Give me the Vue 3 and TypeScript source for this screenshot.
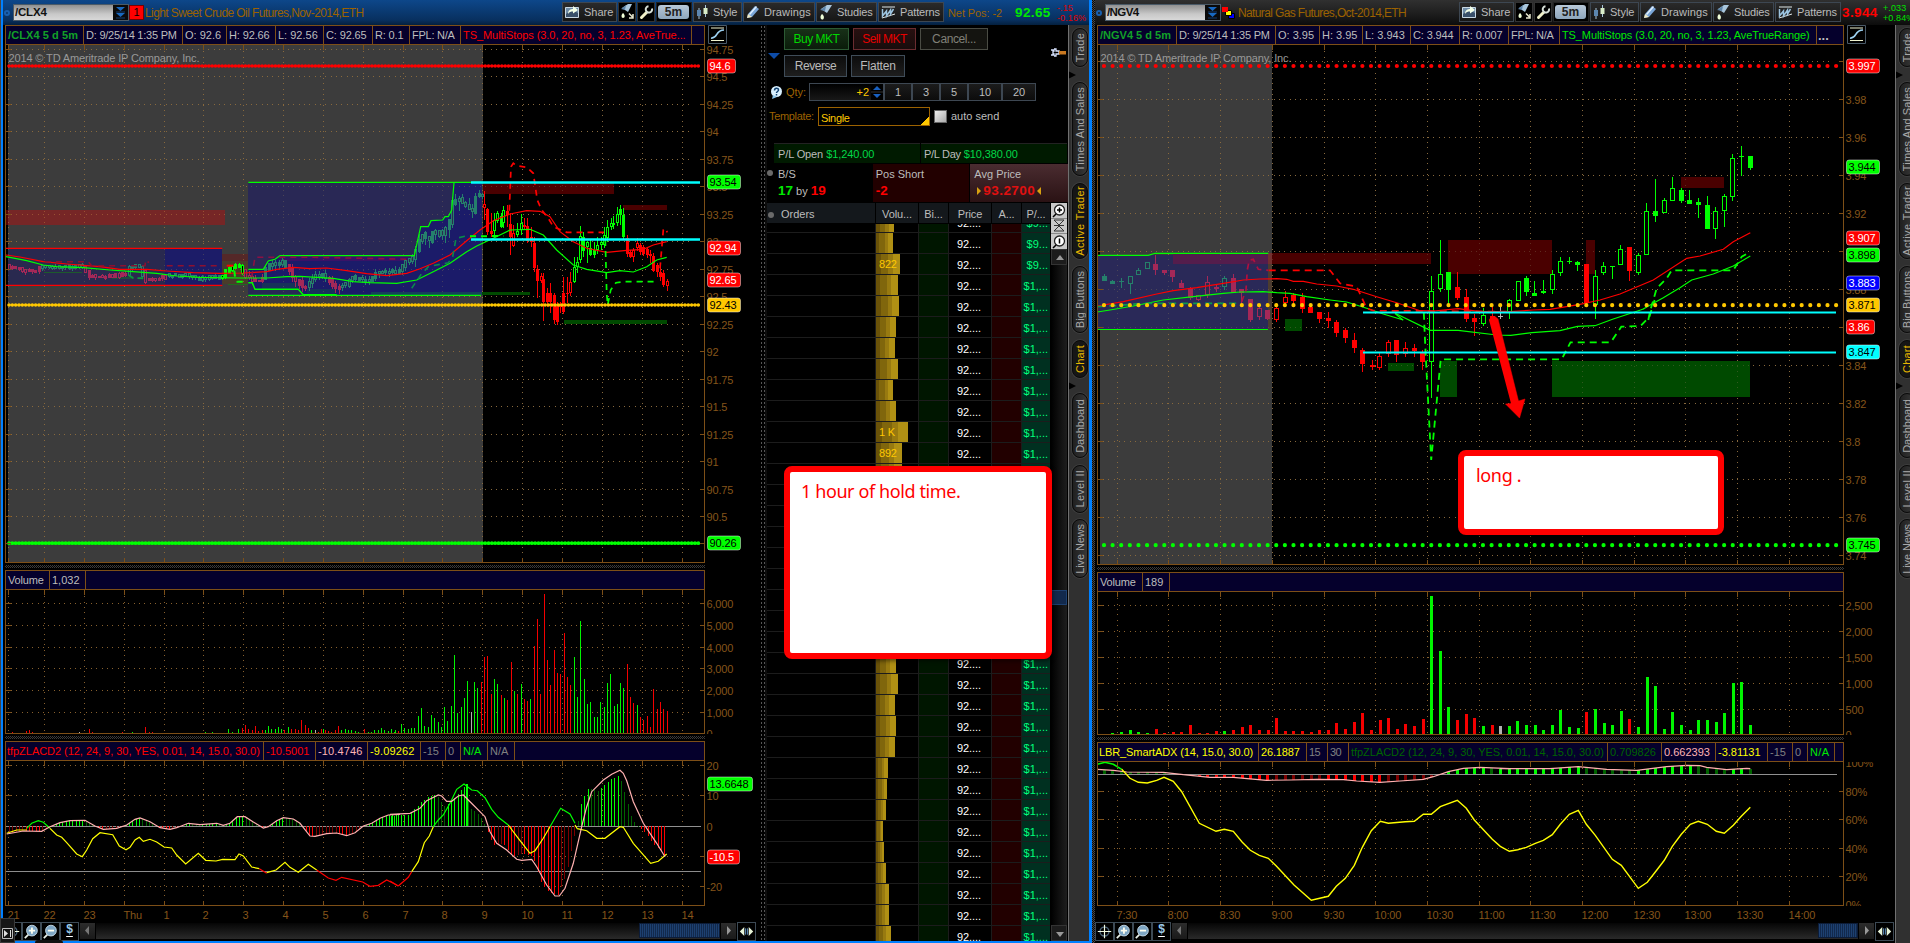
<script setup lang="ts">
type Kind = 'g' | 'G' | 'r' | 'R' | 'w'
interface Cell { t: string; w: number; fit?: number; c?: string }
interface Candle { x: number; hi: number; top: number; bot: number; lo: number; k: Kind; dim: boolean }
interface Shape { pts: string; c: string; w?: number; dash?: string; fill?: string; cap?: 'round' | 'butt' }
interface Box { x: number; y: number; w: number; h: number; c: string }
interface Label { y: number; t: string }
interface Flag { y: number; t: string; bg: string; fg: string; w: number }
interface Pane {
  top: number; h: number; shade: number; grid: number[]; labels: Label[]; flags: Flag[]
  under: Box[]; fills: Shape[]; bars: Box[]; lines: Shape[]; candles: Candle[]; over: Shape[]; ticks: boolean
}
interface Win {
  id: 'cl' | 'ng'; symbol: string; title: string; titleFit: number; x0: number; right: number; width: number
  cols: number[]; times: string[]; status: Cell[]; volCells: Cell[]; studyCells: Cell[]; panes: Pane[]
}

const GREEN = '#00ff00'
const RED = '#ff0000'
const YEL = '#ffff00'
const PINK = '#ffb0b0'
const CYAN = '#00ffff'
const GOLD = '#ffc800'

/* Spreads or tightens a label so that it takes a fixed width. */
const vFit = {
  mounted(el: HTMLElement, b: { value?: number }) {
    if (!b.value) return
    const n = (el.textContent ?? '').trim().length
    const now = Math.max(el.offsetWidth, el.offsetHeight)
    el.style.letterSpacing = ((b.value - now) / n).toFixed(3) + 'px'
  },
}

/* Series are stored in sub-pixel units (3 to a pixel) from a local origin. */
const pairs = (s: string) => s.trim().split(/\s+/).map((p) => p.split(',').map(Number))
const at = (ox: number, oy: number, s: string, sx = 3) =>
  pairs(s).map(([x, y]) => (ox + x / sx).toFixed(1) + ',' + (oy + y / 3).toFixed(1)).join(' ')
const line = (c: string, pts: string, w = 1.2, dash = ''): Shape => ({ pts, c, w, dash })
const rect = (ox: number, oy: number, x1: number, y1: number, x2: number, y2: number, c: string, sx = 3): Box =>
  ({ x: ox + x1 / sx, y: oy + y1 / 3, w: (x2 - x1) / sx, h: (y2 - y1) / 3, c })

function volume(ox: number, oy: number, base: number, s: string, w: number): Box[] {
  let c = GREEN
  const out: Box[] = []
  for (const tok of s.trim().split(/[\s,]+/)) {
    if (tok === 'g') c = '#00f400'
    else if (tok === 'r') c = '#f40000'
    else if (tok === 'w') c = '#b0b0b0'
    else {
      const [x, y] = tok.split(':').map(Number)
      out.push({ x: Math.round(ox + x / 3 - w / 2), y: oy + y / 3, w, h: (base - y) / 3, c })
    }
  }
  return out
}

function interp(p: number[][], x: number) {
  for (let i = 1; i < p.length; i++) {
    if (x <= p[i][0]) {
      const [ax, ay] = p[i - 1]
      const [bx, by] = p[i]
      return ay + ((by - ay) * (x - ax)) / (bx - ax)
    }
  }
  return p[p.length - 1][1]
}

function histogram(ox: number, oy: number, zero: number, s: string, from: number, to: number, step: number, w: number): Box[] {
  const p = pairs(s)
  const out: Box[] = []
  for (let x = from; x <= to; x += step) {
    const v = interp(p, x)
    const grow = Math.abs(interp(p, x) - zero) >= Math.abs(interp(p, x - step * 0.8) - zero)
    const up = v < zero
    out.push({
      x: Math.round(ox + x / 3 - w / 2), w, y: oy + Math.min(v, zero) / 3, h: Math.max(0.8, Math.abs(v - zero) / 3),
      c: up ? (grow ? GREEN : '#006400') : grow ? RED : '#7c0000',
    })
  }
  return out
}

/* rows: x,high,top,bottom,low,kind */
function candles(ox: number, oy: number, s: string, dimTo = 0, sx = 3): Candle[] {
  return s.trim().split(/\s+/).map((row) => {
    const f = row.split(',')
    const [x, hi, top, bot, lo] = f.slice(0, 5).map(Number)
    return {
      x: Math.round(ox + x / sx), hi: oy + hi / 3, top: Math.round(oy + top / 3), bot: Math.round(oy + bot / 3),
      lo: oy + lo / 3, k: f[5] as Kind, dim: x < dimTo,
    }
  })
}

function overnight(): Candle[] {
  const mid = pairs(`25,800 60,802 75,812 110,812 125,800 180,800 255,798 265,825 300,830 380,822 395,798 425,798 437,842 480,836 500,828
    560,822 600,835 640,830 665,832 690,805 715,790 735,822 760,838 790,838 805,795 850,785 872,812 885,840 905,850 915,868 935,838 960,820
    985,832 1010,866 1040,852 1060,832 1110,842 1130,815 1200,812 1215,790 1243,770 1256,735 1270,700 1290,722 1305,685 1325,708 1350,670 1362,600
    1380,598 1400,615 1420,638 1430,590 1445,585`)
  const out: Candle[] = []
  let seed = 7
  const rnd = () => ((seed = (seed * 16807) % 2147483647) / 2147483647)
  for (let x = 26; x <= 1446; x += 10) {
    const a = interp(mid, x - 6) + (rnd() - 0.5) * 8
    const b = interp(mid, x + 6) + (rnd() - 0.5) * 8
    const amp = x > 1240 ? 26 : x > 740 ? 15 : 7
    const falling = (x < 120 || (x > 250 && x < 385) || (x > 430 && x < 500) || (x > 735 && x < 790) || (x > 865 && x < 925) || (x > 985 && x < 1025))
    out.push({
      x: Math.round(x / 3), hi: (Math.min(a, b) - rnd() * amp) / 3, top: Math.round((Math.min(a, b) - 3) / 3),
      bot: Math.round((Math.max(a, b) + 5) / 3), lo: (Math.max(a, b) + 4 + rnd() * amp) / 3,
      k: falling ? (rnd() > 0.6 ? 'r' : 'R') : rnd() > 0.35 ? 'g' : 'G', dim: !(x > 665 && x < 735),
    })
  }
  return out
}

function colour(c: Candle) {
  if (c.k === 'w') return '#b4b4b4'
  const up = c.k === 'g' || c.k === 'G'
  return c.dim ? (up ? '#25806c' : '#a42858') : up ? GREEN : RED
}
const hollow = (c: Candle) => c.k === 'g' || c.k === 'r'

/* ---------- crude oil ---------- */
const clPinkA = '20,912 70,903 125,904 150,890 180,878 210,872 255,871 285,888 310,898 350,895 380,885 405,868 420,864 450,875 480,893 510,898 530,893 565,880 600,884 650,880 670,886 690,880 712,860 735,860 760,876 790,894 805,890 830,872 850,863 880,867 900,880 930,918 945,919 980,911 1010,909 1040,917 1065,908 1090,888 1115,880 1140,865 1165,855 1200,853'
const clPinkB = '0,853 60,850 90,835 110,812 145,795 155,798 170,814 185,814 205,798 220,795 250,825 285,860 300,905 320,940 350,960 380,988 395,991 425,988 440,1010 470,1065 495,1098 508,1098 525,1075 550,1000 575,890 590,830 605,785 640,750 665,733 690,721 700,730 710,752 730,815 760,880 800,940 825,980'
const clHist = '0,858 60,854 90,820 115,800 140,795 165,830 185,815 205,790 225,770 240,835 270,855 290,895 310,945 340,940 370,980 400,970 430,980 455,1060 475,1085 505,1095 530,1030 552,925 562,885 572,825 595,775 625,782 660,750 688,735 705,790 725,860 740,885 760,900 790,940 832,982'

const clMain: Pane = {
  top: 45, h: 518, shade: 483, ticks: true,
  grid: Array.from({ length: 19 }, (_, i) => 49.5 + i * 27.47),
  labels: Array.from({ length: 18 }, (_, i) => ({ y: 50 + i * 27.47, t: String(94.75 - i * 0.25) })),
  flags: [
    { y: 66, t: '94.6', bg: RED, fg: '#fff', w: 28 },
    { y: 182, t: '93.54', bg: GREEN, fg: '#000', w: 33 },
    { y: 248, t: '92.94', bg: RED, fg: '#fff', w: 33 },
    { y: 280, t: '92.65', bg: RED, fg: '#fff', w: 33 },
    { y: 305, t: '92.43', bg: GOLD, fg: '#000', w: 33 },
    { y: 543, t: '90.26', bg: GREEN, fg: '#000', w: 33 },
  ],
  under: [
    rect(0, 0, 18, 630, 675, 675, 'rgba(200,10,10,.42)'),
    rect(0, 0, 24, 746, 495, 856, '#29294f'),
    rect(0, 0, 495, 746, 667, 856, '#1c1c68'),
    rect(0, 0, 745, 547, 1445, 886, '#292855'),
    rect(0, 0, 667, 763, 745, 783, 'rgba(120,10,10,.4)'),
    rect(0, 0, 667, 783, 745, 852, 'rgba(100,60,10,.35)'),
  ],
  fills: [
    { pts: at(0, 0, '745,808 790,808 805,783 825,778 840,767 1243,767 1262,680 1285,680 1293,662 1328,660 1335,650 1345,650 1355,630 1362,548 1445,548 1445,886 910,886 895,868 765,868 757,848 745,848'), c: 'none', fill: '#1b1b69' },
  ],
  bars: [
    rect(0, 0, 840, 768, 1240, 783, 'rgba(90,10,100,.5)'),
    rect(0, 0, 132, 815, 245, 819, '#1d5a2c'), rect(0, 0, 336, 830, 400, 837, '#1f4a3c'),
    rect(0, 0, 785, 850, 895, 868, '#17325a'), rect(0, 0, 920, 867, 1005, 884, '#17325a'),
    rect(0, 0, 1113, 876, 1445, 885, '#15405a'), rect(0, 0, 685, 851, 745, 855, '#1f6a1f'),
    rect(460, 0, 69, 550, 462, 581, '#4a0000'), rect(460, 0, 489, 615, 621, 629, '#4a0000'),
    rect(460, 0, 66, 876, 210, 885, '#004a00'), rect(460, 0, 312, 960, 621, 972, '#004a00'),
  ],
  candles: [
    ...overnight(),
    ...candles(460, 0, `72,573,612,625,660,r 82,625,628,697,705,R 92,640,692,702,712,R 102,640,660,692,712,g 112,632,640,662,668,g 122,640,648,680,685,G
    130,618,630,670,685,g 140,615,632,645,680,R 150,640,673,710,765,R 160,675,700,738,742,r 172,668,692,705,710,g 182,642,670,690,705,g 192,655,675,680,690,R
    202,655,678,722,728,R 212,680,712,725,740,R 222,712,728,805,815,R 232,795,808,842,895,R 242,818,828,842,850,r 250,820,838,905,962,R 260,865,880,905,920,R
    270,850,878,905,938,R 282,880,885,960,972,R 290,905,918,965,975,R 300,905,915,920,940,r 310,830,880,935,942,R 320,830,878,882,910,R 330,815,845,880,888,r
    342,770,800,845,848,g 350,770,785,802,820,g 360,678,708,780,790,g 370,695,712,752,770,G 380,722,725,740,790,g 390,718,745,765,768,G 402,725,750,765,775,G
    412,712,735,750,762,g 422,712,725,735,750,g 432,680,705,735,745,g 440,660,680,715,725,g 452,655,670,680,690,g 460,648,668,675,688,g 470,622,642,670,678,g
    480,615,628,645,675,G 490,625,645,712,720,G 500,705,715,762,770,R 510,750,755,772,775,R 520,745,750,770,785,r 530,715,730,745,752,r 540,730,735,755,765,R
    550,735,742,762,768,R 560,740,748,765,775,R 570,750,762,768,790,R 580,760,768,812,815,R 590,788,795,815,830,R 600,795,815,830,842,R 610,810,818,855,860,R
    620,838,842,858,872,r`),
  ],
  lines: [
    line(RED, at(0, 0, '18,745 667,745')), line(RED, at(0, 0, '18,856 667,856')),
    line(RED, at(0, 0, '18,765 60,771 130,785 200,792 300,800 360,808 440,808 500,813 580,818 660,820 730,819 800,815 830,808 880,802 930,806 980,804 1040,812 1100,821 1160,827 1220,820 1260,806 1300,790 1350,765 1400,722 1440,690 1480,662 1530,642 1580,632 1620,634 1650,650 1680,695 1720,725 1760,745 1820,757 1880,751 1930,748 1960,735 2000,725')),
    line(GREEN, at(0, 0, '18,770 80,782 130,795 170,800 250,803 330,810 400,815 470,820 530,828 600,832 720,834 800,834 860,830 900,829 1000,835 1060,845 1110,848 1190,850 1250,840 1300,815 1350,790 1400,755 1430,738 1480,715 1530,690 1590,688 1630,705 1670,750 1720,795 1760,808 1820,818 1860,812 1900,816 1940,800 1970,780 2000,772')),
    line(GREEN, at(0, 0, '745,808 790,808 805,783 825,778 840,767 1243,767 1262,680 1285,680 1293,662 1328,660 1335,650 1345,650 1355,630 1362,548')),
    line(GREEN, at(0, 0, '745,547 1445,547')),
    line(GREEN, at(0, 0, '745,848 757,848 765,868 895,868 910,884 1010,884'), 1.4),
    line(GREEN, at(0, 0, '745,886 1443,886')),
    line('#8c1030', at(0, 0, '135,785 265,785 275,797 435,797 437,780 447,788'), 1.6, '6 5'),
    line('#8c1030', at(0, 0, '500,797 665,797'), 1.6, '6 5'),
    line(RED, at(0, 0, '680,797 700,797'), 2),
    line('#8c1044', at(0, 0, '755,830 765,772 790,772 940,772 1235,778'), 1.6, '6 5'),
    line('#0a9a3c', at(0, 0, '385,825 400,834 430,835'), 2, '6 4'),
    line('#0a8a4c', at(0, 0, '1235,865 1262,825 1285,800 1345,788 1358,770 1368,715 1395,709 1440,709'), 1.6, '6 5'),
    line(GREEN, at(460, 0, '30,709 130,708'), 2, '6 5'),
    line(GREEN, at(0, 0, '703,812 705,830 712,845 730,845'), 2, '6 5'),
    line(RED, at(460, 0, '148,632 153,500 160,490 170,497 200,502 220,520 232,600 245,630 265,655 280,680 320,697 432,697'), 1.7, '6 5'),
    line(RED, at(460, 0, '600,805 610,690 615,685 622,697'), 1.7, '6 5'),
    line(GREEN, at(460, 0, '436,720 440,880 443,915 452,870 468,848 490,845 590,845'), 1.7, '6 5'),
    line(CYAN, '471,182.5 700,182.5', 2.4), line(CYAN, '471,239.5 700,239.5', 2.4),
  ],
  over: [
    { pts: '9,66 701,66', c: RED, w: 3.6, dash: '0 3.33', cap: 'round' },
    { pts: '9,305 701,305', c: GOLD, w: 3.6, dash: '0 3.33', cap: 'round' },
    { pts: '9,543.2 701,543.2', c: GREEN, w: 3.8, dash: '0 3.33', cap: 'round' },
  ],
}

const clVol: Pane = {
  top: 590, h: 144, shade: 0, ticks: true, grid: [603.5, 625.5, 647.5, 668.5, 690.5, 712.5],
  labels: [6, 5, 4, 3, 2, 1].map((n, i) => ({ y: 604 + i * 21.8, t: n + ',000' })).concat([{ y: 734, t: '0' }]),
  flags: [], under: [], fills: [], candles: [], lines: [], over: [],
  bars: [
    ...volume(0, 530, 609, `r 38:606,79:603,88:600,97:606 w 238:606 r 268:597,277:606,367:606 g 397:606 r 436:591,448:606,457:606 g 616:606,637:606,685:597,697:606,715:597
    r 727:594,736:585,745:597,757:600,766:588,775:603,787:600 g 796:600,805:588,814:597,826:597,835:591,844:597 r 853:600 g 865:591 r 874:597,886:597,895:600,904:570,916:585,925:594
    g 934:600 w 946:600 r 955:606,964:597 g 970:597 r 976:600,985:603,994:606,1006:600,1015:588 g 1024:600,1036:597,1045:600,1054:600,1066:603,1075:606 r 1093:597
    g 1105:606,1114:606,1123:600,1135:600,1144:594,1153:600,1165:603,1174:597,1186:600 r 1195:603`, 1),
    ...volume(390, 530, 609, `g 4:598,13:606 r 25:603 g 34:582,43:595,55:597,64:594,73:594,85:557,94:534,103:588,115:591,124:555,133:564,145:576,154:591,163:531,172:573,184:528,193:375,202:549,214:531,223:504,232:453
    w 244:546 g 253:456,262:474 r 274:456,283:381,292:378,304:492 g 313:447,322:462 r 334:495 g 343:504 r 352:510,364:396 g 373:483 r 382:492 g 394:462 r 403:507,412:513 g 421:507
    r 433:348,442:267,451:492,463:192,472:390,481:465,493:360,502:429,511:432,523:309,532:441,541:465 g 553:381,562:501,571:273,583:447,592:522,601:516,613:561,622:561,631:516,643:531,652:459,661:432,673:528,682:522,691:459,700:474
    r 712:402,721:501,730:519 g 742:525 r 751:561,760:570,772:558,781:591,790:477,802:537,811:516,820:537,832:543`, 1),
  ],
}

const clStudy: Pane = {
  top: 761, h: 145, shade: 0, ticks: true, grid: [765.5, 795.5, 856.5, 886.5],
  labels: [{ y: 766, t: '20' }, { y: 796, t: '10' }, { y: 827, t: '0' }, { y: 887, t: '-20' }],
  flags: [{ y: 784, t: '13.6648', bg: GREEN, fg: '#000', w: 45 }, { y: 857, t: '-10.5', bg: RED, fg: '#fff', w: 32 }],
  under: [], fills: [], candles: [], over: [],
  bars: [
    { x: 6, y: 826, w: 695, h: 1, c: '#909090' }, { x: 6, y: 871, w: 695, h: 1, c: '#8c8c8c' },
    ...histogram(0, 530, 889, clPinkA, 28, 1195, 10, 1),
    ...histogram(390, 530, 889, clHist, 4, 833, 10, 1),
    rect(390, 530, 228, 762, 234, 889, GREEN),
  ],
  lines: [
    line(YEL, at(0, 530, '20,910 50,900 80,900')),
    line(GREEN, at(0, 530, '80,895 95,880 115,872 130,877 150,895')),
    line(YEL, at(0, 530, '150,895 170,915 185,922 200,938 230,972 247,980 260,960 278,926 300,908 338,914 358,948 378,959 390,952 405,930 418,922 430,934 450,928 470,936 492,951 515,954 530,975 557,1002 595,970 617,991 648,993 668,988 705,989 717,972 730,978 755,1011 778,1016')),
    line(RED, at(0, 530, '778,1016 800,1030')),
    line(YEL, at(0, 530, '800,1028 828,1020 855,997 870,1012 895,1027 925,1003 950,1020')),
    line(RED, at(0, 530, '950,1020 985,1044 1008,1051 1025,1042 1088,1056 1110,1069 1135,1066 1160,1050 1180,1060 1195,1068')),
    line(RED, at(390, 530, '25,1068 55,1042 65,1025')), line(RED, '398.3,886 390,881'),
    line(YEL, at(390, 530, '65,1025 85,995 103,938 118,918 130,890')),
    line(GREEN, at(390, 530, '130,890 145,870 160,855 180,820 200,778 222,762 245,780 262,782 285,803 305,838 325,862 355,885')),
    line(YEL, at(390, 530, '355,885 385,925 420,970 435,962 460,925 480,890')),
    line(GREEN, at(390, 530, '480,890 512,835 540,852 555,880')),
    line(YEL, at(390, 530, '555,885 562,896 590,902 620,925 645,925 690,890 700,892 730,940 782,1000 805,994 830,972')),
    line(PINK, at(0, 530, clPinkA)), line(PINK, at(390, 530, clPinkB)),
  ],
}

/* ---------- natural gas ---------- */
const ngPinkA = '22,598 70,601 110,606 220,607 280,614 360,622 430,622 530,631 600,630 680,628 760,629 800,633 870,637 930,633 1000,628 1030,620 1075,605 1120,595 1170,592 1260,596'
const ngPinkB = '0,596 150,596 235,590 320,598 410,601 500,590 560,586 600,587 620,592 680,599 740,595 751,596'

const ngMain: Pane = {
  top: 45, h: 520, shade: 1272, ticks: true,
  grid: Array.from({ length: 14 }, (_, i) => 61.6 + i * 37.98),
  labels: Array.from({ length: 13 }, (_, i) => ({ y: 100 + i * 37.98, t: String(Math.round((3.98 - i * 0.02) * 100) / 100) })),
  flags: [
    { y: 66, t: '3.997', bg: RED, fg: '#fff', w: 33 },
    { y: 167, t: '3.944', bg: GREEN, fg: '#000', w: 33 },
    { y: 238, t: '3.907', bg: RED, fg: '#fff', w: 33 },
    { y: 255, t: '3.898', bg: GREEN, fg: '#000', w: 33 },
    { y: 283, t: '3.883', bg: '#0000ff', fg: '#fff', w: 33 },
    { y: 305, t: '3.871', bg: GOLD, fg: '#000', w: 33 },
    { y: 327, t: '3.86', bg: RED, fg: '#fff', w: 28 },
    { y: 352, t: '3.847', bg: CYAN, fg: '#000', w: 33 },
    { y: 545, t: '3.745', bg: GREEN, fg: '#000', w: 33 },
  ],
  under: [{ x: 1098, y: 255, w: 171, h: 74, c: '#2a2958' }, { x: 1268, y: 255, w: 4, h: 74, c: '#4c3c30' }],
  fills: [],
  bars: [
    rect(1090, 0, 249, 762, 534, 792, '#541d4c'), rect(1090, 0, 534, 759, 546, 792, '#743030'), rect(1090, 0, 546, 759, 1023, 792, '#4a0000'),
    { x: 1448, y: 240, w: 104, h: 34, c: '#4a0000' }, rect(1500, 0, 258, 720, 285, 822, '#4a0000'), rect(1500, 0, 543, 531, 672, 564, '#4a0000'),
    { x: 1285, y: 319, w: 17, h: 12, c: '#004a00' }, rect(1360, 310, 80, 159, 154, 183, '#004a00', 2.851),
    rect(1360, 310, 228, 153, 277, 261, '#004a00', 2.851), rect(1360, 310, 547, 153, 1112, 261, '#004a00', 2.851),
  ],
  candles: [
    ...candles(1090, 0, `43,822,829,843,843,G 67,840,843,851,851,G 94,834,843,846,864,G 119,829,829,851,882,g 145,805,811,824,824,g 172,787,787,806,806,g 196,765,793,811,824,R
    223,811,811,818,824,R 247,811,811,830,845,R 274,840,850,863,863,R 301,860,863,893,899,R 325,886,886,899,902,r 352,829,845,885,893,r 379,855,862,867,875,r 403,829,835,862,870,g
    430,822,835,880,880,R 454,868,868,880,912,R 481,897,898,960,965,R 508,912,925,950,960,r 532,930,930,957,960,R`, 545),
    ...candles(1090, 0, `559,908,925,960,965,r 585,873,891,908,912,r 610,880,885,902,915,R 637,880,892,927,938,R 661,915,922,938,938,R 688,937,937,957,970,R 715,937,955,962,985,R
    739,960,965,1000,1010,R 766,985,990,1015,1030,R 793,1000,1020,1045,1060,R 1024,828,874,1085,1193,g 1051,720,822,868,875,g 1075,816,816,870,915,G 1102,816,862,893,900,R
    1129,867,891,957,965,R 1153,942,955,965,1007,R 1180,925,945,971,977,g 1205,920,947,960,962,R 1231,920,949,952,958,w 1257,897,900,937,958,g`),
    ...candles(1360, 310, `7,113,120,162,186,R 33,150,165,169,180,r 55,130,138,173,180,r 81,90,97,132,140,r 104,90,90,135,155,R 129,97,113,132,140,r 155,103,113,123,140,R 178,120,130,155,180,R`, 0, 2.851),
    ...candles(1500, 0, `53,842,842,902,902,g 79,828,835,876,888,G 103,842,879,887,887,G 130,840,874,880,882,g 157,810,822,869,882,g 181,771,784,818,828,g 208,771,783,787,792,G
    232,783,787,794,812,G 259,792,792,910,910,R 286,810,829,914,957,g 310,787,798,818,824,g 337,798,798,802,836,G 361,735,748,794,794,g 388,741,741,812,842,R 415,758,766,818,824,g
    439,609,634,766,766,g 466,537,633,648,666,G 493,594,601,640,640,g 517,531,565,602,602,g 544,564,570,602,608,G 568,570,600,611,611,G 595,594,606,616,654,G 622,588,615,686,686,G
    646,621,633,686,716,g 673,583,589,634,680,g 697,462,475,590,602,g 724,438,468,472,528,G 751,468,468,504,510,G`),
  ],
  lines: [
    line(GREEN, at(1090, 0, '22,766 175,766 195,760 535,760')), line(GREEN, '1098,329.5 1268,329.5'),
    line(RED, at(1090, 0, '22,918 100,905 200,882 250,872 320,863 400,850 460,840 510,837 560,836 590,838 610,844 640,844 680,852 740,858 790,868 860,890 920,908 990,932 1030,933 1105,926 1170,935 1260,935 1330,930 1380,928 1470,913 1530,900 1590,882 1690,840 1790,775 1830,768 1900,748 1930,725 1981,698')),
    line(GREEN, at(1090, 0, '22,936 60,930 130,918 220,900 310,890 400,880 450,876 520,875 560,878 600,880 650,890 720,900 770,906 830,925 880,942 940,960')),
    line(GREEN, at(1360, 310, '100,10 200,61 280,61 390,75 430,76 490,68 570,62 620,49 670,47 720,28 800,0', 2.851)),
    line(GREEN, at(1500, 0, '430,927 460,910 490,893 520,875 540,863 575,840 640,822 700,798 751,768')),
    line(GREEN, '1403,320 1395,313.5'), line(GREEN, '1640.5,310 1644,308.7'),
    line('#b01040', at(1090, 0, '455,905 468,870 472,810 478,780 490,778 505,808 535,811'), 1.7, '6 5'),
    line(RED, at(1090, 0, '536,811 720,811 750,850 800,860 830,925 850,932 1020,933 1260,935'), 1.7, '7 5'),
    line('#0a9a4c', at(1090, 0, '22,920 90,916 160,910 450,910'), 1.7, '7 5'),
    line(GREEN, at(1360, 310, '182,8 187,130 203,450 230,148 575,148 600,97 715,97 745,50 800,48 825,20 840,-30', 2.851), 1.8, '7 5'),
    line(GREEN, at(1500, 0, '445,960 450,935 470,865 500,835 515,811 700,811 725,770 751,755'), 1.8, '7 5'),
    line(CYAN, '1363,312.5 1836,312.5', 2.2), line(CYAN, '1363,352.5 1836,352.5', 2.2),
  ],
  over: [
    { pts: '1104,66 1838,66', c: RED, w: 4.2, dash: '0 8.613', cap: 'round' },
    { pts: '1104,305.2 1838,305.2', c: GOLD, w: 4.2, dash: '0 8.613', cap: 'round' },
    { pts: '1104,545.2 1838,545.2', c: GREEN, w: 4.2, dash: '0 8.613', cap: 'round' },
    { pts: '1489,320 1491,317.5 1495,316.5 1498,319 1518.5,401 1525,399 1519.5,418 1505.5,404 1511,403.5', c: RED, fill: RED, w: 0.5 },
  ],
}

const ngVol: Pane = {
  top: 592, h: 143, shade: 0, ticks: true, grid: [605.5, 631.5, 657.5, 683.5, 709.5],
  labels: ['2,500', '2,000', '1,500', '1,000', '500'].map((t, i) => ({ y: 606 + i * 26, t })).concat([{ y: 735, t: '0' }]),
  flags: [], under: [], fills: [], candles: [], lines: [], over: [],
  bars: [
    ...volume(1090, 570, 492, `g 67:489,94:486,121:480,145:486,172:489 r 199:477,223:489,250:486,274:486,301:465,328:489,352:489,379:483 g 403:483 r 430:480,457:471,481:465,508:480,535:480,559:444,586:483,610:483,637:483,664:486,688:480,715:480,739:459,766:477,793:456,817:429,844:480,871:450,895:444,922:477,946:462,973:468,1000:447
    g 1024:78,1051:243,1075:411 r 1102:450,1129:432,1153:444 g 1180:468 r 1207:465 w 1231:468`, 3),
    ...volume(1500, 570, 492, `g 28:468,52:453,79:465,106:465,130:480,157:465,181:420,208:471,235:474 r 259:426 g 286:417,313:459,337:465,364:423 r 388:447
    g 415:471,442:321,466:348,493:477,517:426,544:465,571:480,595:450,622:450,649:456,673:429,700:339,724:336,751:465`, 3),
  ],
}

const ngStudy: Pane = {
  top: 762, h: 144, shade: 0, ticks: false, grid: [791.5, 819.5, 848.5, 876.5],
  labels: [{ y: 763, t: '100%' }, { y: 792, t: '80%' }, { y: 820, t: '60%' }, { y: 849, t: '40%' }, { y: 877, t: '20%' }, { y: 905, t: '0%' }],
  flags: [], under: [], fills: [], candles: [], over: [],
  bars: [
    ...histogram(1090, 570, 613, ngPinkA, 43, 1225, 25.84, 3),
    ...histogram(1500, 570, 613, ngPinkB, 2, 752, 25.84, 3),
    { x: 1098, y: 774, w: 739, h: 1, c: '#909090' },
  ],
  lines: [
    line(PINK, at(1090, 570, ngPinkA)), line(PINK, at(1500, 570, ngPinkB)),
    line(GREEN, at(1090, 570, '22,583 45,577 70,583 95,598'), 1.5),
    line(YEL, at(1090, 570, '95,598 120,625 145,637 172,639 200,631 222,622 250,634 275,665 328,760 378,784 403,778 430,784 457,817 481,841 508,856 535,865 559,888 612,945 664,991 715,979 739,949 766,925 793,886 817,832 844,782 871,754 895,760 946,755 973,754 1000,733 1024,733 1051,710 1102,691 1129,715 1153,750 1207,808 1231,829 1258,844 1283,839 1309,832 1336,820 1360,811 1387,794 1411,763 1438,733 1465,721 1489,763 1516,796 1567,868 1594,886 1645,955 1672,937 1696,906 1723,871 1747,829 1774,793 1801,763 1825,754 1852,763 1879,784 1903,790 1930,766 1954,739 1981,712'), 1.4),
  ],
}

const wins: Win[] = [
  {
    id: 'cl', symbol: '/CLX4', title: 'Light Sweet Crude Oil Futures,Nov-2014,ETH', titleFit: 218, x0: 5, right: 704, width: 755,
    cols: [8, 44, 84, 124, 164, 203, 243, 283, 323, 363, 403, 442, 482, 522, 562, 602, 642, 682],
    times: ['21', '22', '23', 'Thu', '1', '2', '3', '4', '5', '6', '7', '8', '9', '10', '11', '12', '13', '14'],
    status: [
      { t: '/CLX4 5 d 5m', w: 78, fit: 70, c: 'sym' }, { t: 'D: 9/25/14 1:35 PM', w: 99, fit: 91 }, { t: 'O: 92.6', w: 44, fit: 36 },
      { t: 'H: 92.66', w: 49, fit: 41 }, { t: 'L: 92.56', w: 48, fit: 40 }, { t: 'C: 92.65', w: 49, fit: 41 }, { t: 'R: 0.1', w: 37, fit: 28 },
      { t: 'FPL: N/A', w: 51, fit: 43 }, { t: 'TS_MultiStops (3.0, 20, no, 3, 1.23, AveTrue...', w: 231, fit: 223, c: 'red' },
    ],
    volCells: [{ t: 'Volume', w: 44, fit: 36 }, { t: '1,032', w: 36, fit: 28 }],
    studyCells: [
      { t: 'tfpZLACD2 (12, 24, 9, 30, YES, 0.01, 14, 15.0, 30.0)', w: 258, fit: 253, c: 'red tight' }, { t: '-10.5001', w: 52, fit: 43, c: 'red' },
      { t: '-10.4746', w: 52, fit: 44, c: 'pink' }, { t: '-9.09262', w: 53, fit: 44, c: 'yel' }, { t: '-15', w: 25, fit: 16, c: 'dim' },
      { t: '0', w: 15, c: 'dim' }, { t: 'N/A', w: 27, fit: 18, c: 'grn' }, { t: 'N/A', w: 27, fit: 18, c: 'dim' },
    ],
    panes: [clMain, clVol, clStudy],
  },
  {
    id: 'ng', symbol: '/NGV4', title: 'Natural Gas Futures,Oct-2014,ETH', titleFit: 168, x0: 1097, right: 1843, width: 798,
    cols: [1117, 1168, 1220, 1272, 1324, 1375, 1427, 1479, 1530, 1582, 1634, 1685, 1737, 1789],
    times: ['7:30', '8:00', '8:30', '9:00', '9:30', '10:00', '10:30', '11:00', '11:30', '12:00', '12:30', '13:00', '13:30', '14:00'],
    status: [
      { t: '/NGV4 5 d 5m', w: 79, fit: 71, c: 'sym' }, { t: 'D: 9/25/14 1:35 PM', w: 99, fit: 91 }, { t: 'O: 3.95', w: 44, fit: 36 },
      { t: 'H: 3.95', w: 43, fit: 35 }, { t: 'L: 3.943', w: 48, fit: 40 }, { t: 'C: 3.944', w: 49, fit: 41 }, { t: 'R: 0.007', w: 49, fit: 41 },
      { t: 'FPL: N/A', w: 51, fit: 43 }, { t: 'TS_MultiStops (3.0, 20, no, 3, 1.23, AveTrueRange)', w: 257, fit: 248, c: 'grn' }, { t: '...', w: 27, c: 'bold tight' },
    ],
    volCells: [{ t: 'Volume', w: 45, fit: 36 }, { t: '189', w: 27, fit: 18 }],
    studyCells: [
      { t: 'LBR_SmartADX (14, 15.0, 30.0)', w: 161, fit: 154, c: 'yel tight' }, { t: '26.1887', w: 48, fit: 39, c: 'yel' }, { t: '15', w: 21, fit: 12, c: 'dim' },
      { t: '30', w: 21, fit: 12, c: 'dim' }, { t: 'tfpZLACD2 (12, 24, 9, 30, YES, 0.01, 14, 15.0, 30.0)', w: 259, fit: 253, c: 'dkg' }, { t: '0.709826', w: 54, fit: 46, c: 'dkg' },
      { t: '0.662393', w: 54, fit: 46, c: 'pink' }, { t: '-3.81131', w: 52, fit: 43, c: 'yel' }, { t: '-15', w: 25, fit: 16, c: 'dim' },
      { t: '0', w: 15, c: 'dim' }, { t: 'N/A', w: 27, fit: 19, c: 'grn' },
    ],
    panes: [ngMain, ngVol, ngStudy],
  },
]

const tabs = [
  { t: 'Trade', h: 39, gap: 3, fit: 29 }, { t: 'Times And Sales', h: 94, gap: 15, fit: 84 }, { t: 'Active Trader', h: 76, gap: 7, fit: 70 },
  { t: 'Big Buttons', h: 67, gap: 7, fit: 57 }, { t: 'Chart', h: 38, gap: 7, fit: 28 }, { t: 'Dashboard', h: 65, gap: 15, fit: 54 },
  { t: 'Level II', h: 48, gap: 7, fit: 37 }, { t: 'Live News', h: 59, gap: 6, fit: 50 },
]
const tabOn = (w: Win, t: string) => t === 'Chart' || (w.id === 'cl' && t === 'Active Trader')

const barW = [18, 17, 24, 22, 23, 20, 19, 22, 17, 20, 32, 26, 26, 24, 22, 23, 21, 22, 20, 22, 20, 20, 22, 19, 20, 19, 12, 11, 10, 7, 8, 10, 13, 13, 15]
const rows = barW.map((w, i) => ({ w, vol: i === 2 ? '822' : i === 10 ? '1 K' : i === 11 ? '892' : '', pl: i < 3 ? '$9...' : '$1,...' }))
const tools = ['Share', 'brush', 'wrench', '5m', 'Style', 'Drawings', 'Studies', 'Patterns']
const isText = (t: string) => !['brush', 'wrench', '5m'].includes(t)
const toolFit: Record<string, number> = { Share: 29, Style: 24, Drawings: 47, Studies: 36, Patterns: 40 }
</script>

<template>
  <div class="desk">
    <section v-for="w in wins" :key="w.id" class="win" :class="w.id">
      <div class="edge"><i></i></div>
      <div class="content">
        <header class="bar">
          <i class="ring"></i>
          <div class="combo"><b><span v-fit="32" class="ib">{{ w.symbol }}</span></b>
            <svg width="15" height="15" viewBox="0 0 15 15"><path d="M3 2h9l-4.500 4zM3 8h9l-4.500 4z" fill="#1868c0" /><path d="M3 7h9M3 13h9" stroke="#123c70" /></svg>
          </div>
          <span v-if="w.id === 'cl'" class="link">1</span>
          <svg v-else class="linkicon" width="14" height="14" viewBox="0 0 14 14"><path d="M6.500 7.500h6v5h-6z" fill="#00f" stroke="#000" /><path d="M3.500 4.500h6v5h-6z" fill="#ff0" stroke="#000" /><path d="M0 1h6v5H0z" fill="#f00" /></svg>
          <span class="name"><span v-fit="w.titleFit" class="ib">{{ w.title }}</span></span>
          <div class="tools">
            <span v-for="t in tools" :key="t" class="tool" :class="['t-' + t.toLowerCase()]">
              <svg v-if="t === 'Share'" width="15" height="14" viewBox="0 0 15 14"><path d="M.5 2.500h13v10H.5z" fill="#6f8ca6" stroke="#c8d8e4" /><path d="M1 12V9l6-4 6 3v4z" fill="#39506a" /><path d="M3 9c0-4 3-5 5-5V1l5 4-5 3.500V6.500C6 6.500 4 7 3 9z" fill="#f4ffe8" /></svg>
              <svg v-else-if="t === 'brush'" width="15" height="16" viewBox="0 0 15 16"><path d="M2 4l6-4h4L8 8 5 6z" fill="#a9c6dc" /><path d="M1 5l5-4-1 5z" fill="#5d83a8" /><path d="M3 9c2.500 2 2 5 0 5s-2-3.500 0-5z" fill="#f0ffd8" /><path d="M9 9.500l4 4M13 10v4H9" stroke="#e8e8d0" stroke-width="1.500" fill="none" /></svg>
              <svg v-else-if="t === 'wrench'" width="15" height="16" viewBox="0 0 15 16"><path d="M2.500 13.500l5-5" stroke="#f0f0c8" stroke-width="3" stroke-linecap="round" /><path d="M13 4.500A3.200 3.200 0 1 1 9.500 2.200" stroke="#d8e0d8" stroke-width="2" fill="none" /></svg>
              <b v-else-if="t === '5m'" class="five">5m</b>
              <svg v-else-if="t === 'Style'" width="13" height="15" viewBox="0 0 13 15"><path d="M3 3v11M9.500 0v12" stroke="#a8c4d8" /><path d="M1 5h4v6H1z" fill="#5c86b0" /><path d="M7.500 3h4v6h-4z" fill="#d8ecc8" /></svg>
              <svg v-else-if="t === 'Drawings'" width="14" height="14" viewBox="0 0 14 14"><path d="M2 9l7-8 4 3-7 8-5 1z" fill="#7aa6d8" /><path d="M3.500 9.500l7-8" stroke="#e0f0ff" stroke-width="1.500" /><path d="M1 13l1-4 4 3z" fill="#f0e8c0" /></svg>
              <svg v-else-if="t === 'Studies'" width="14" height="15" viewBox="0 0 14 15"><path d="M2 4l6-4h5L8 8 5 6z" fill="#a9c6dc" /><path d="M1 5l6-4-1 5z" fill="#5d83a8" /><path d="M3 9c3 2 2 6 0 5.500s-2-4 0-5.500z" fill="#f0ffd8" /></svg>
              <svg v-else width="15" height="13" viewBox="0 0 15 13"><path d="M1 1h13M1 12L14 8" stroke="#e0e8e8" /><path d="M1.500 3v7l4-5v5l4-6v4l3-5" stroke="#9cc4e0" stroke-width="1.500" fill="none" /></svg>
              <span v-if="isText(t)" v-fit="toolFit[t]" class="ib">{{ t }}</span>
            </span>
          </div>
          <span v-if="w.id === 'cl'" class="net"><span v-fit="54" class="ib">Net Pos: -2</span></span>
          <b class="last"><span v-fit="36" class="ib">{{ w.id === 'cl' ? '92.65' : '3.944' }}</span></b>
          <span class="chg"><span>{{ w.id === 'cl' ? '-.15' : '+.033' }}</span><span>{{ w.id === 'cl' ? '-0.16%' : '+0.84%' }}</span></span>
        </header>

        <div class="body">
          <div class="chart">
            <template v-for="(p, pi) in w.panes" :key="pi">
              <div v-if="pi" class="split"></div>
              <div class="status">
                <div class="cells">
                  <span v-for="(c, ci) in [w.status, w.volCells, w.studyCells][pi]" :key="ci" class="cell" :class="c.c" :style="{ width: c.w + 'px' }">
                    <span v-fit="c.fit" class="ib">{{ c.t }}</span>
                  </span>
                </div>
                <svg v-if="pi === 0" class="curve" width="19" height="19" viewBox="0 0 19 19"><path d="M.5.500h18v18H.5z" fill="#000" stroke="#4a5a68" /><path d="M3 3h13M3 15.500h13" stroke="#f0f4d0" /><path d="M3 13c7 1 4-8 13-8" stroke="#9cd0f0" stroke-width="1.700" fill="none" /></svg>
              </div>
              <svg class="pane" :width="w.width" :height="p.h" :viewBox="`${w.x0} ${p.top} ${w.width} ${p.h}`">
                <rect v-if="p.shade" :x="w.x0 + 3" :y="p.top" :width="p.shade - w.x0 - 3" :height="p.h" fill="#3c3c3c" />
                <g class="grid">
                  <line v-for="x in w.cols" :key="x" :x1="x + .5" :x2="x + .5" :y1="p.top + 1" :y2="p.top + p.h" />
                  <line v-for="y in p.grid" :key="y" :x1="w.x0 + 6" :x2="w.right - 13" :y1="Math.floor(y) + .5" :y2="Math.floor(y) + .5" />
                </g>
                <g shape-rendering="crispEdges">
                  <rect v-for="(b, i) in p.under" :key="i" :x="b.x" :y="b.y" :width="b.w" :height="b.h" :fill="b.c" />
                </g>
                <polygon v-for="(f, i) in p.fills" :key="'f' + i" :points="f.pts" :fill="f.fill" />
                <g shape-rendering="crispEdges">
                  <rect v-for="(b, i) in p.bars" :key="i" :x="b.x" :y="b.y" :width="b.w" :height="b.h" :fill="b.c" />
                </g>
                <g v-if="p.under.length" class="grid faint">
                  <line v-for="x in w.cols" :key="x" :x1="x + .5" :x2="x + .5" :y1="p.top + 1" :y2="p.top + p.h" />
                  <line v-for="y in p.grid" :key="y" :x1="w.x0 + 6" :x2="w.right - 13" :y1="Math.floor(y) + .5" :y2="Math.floor(y) + .5" />
                </g>
                <g shape-rendering="crispEdges">
                  <template v-for="(c, i) in p.candles" :key="i">
                    <rect :x="c.x" :y="c.hi" width="1" :height="Math.max(1, c.lo - c.hi)" :fill="colour(c)" />
                    <rect v-if="hollow(c)" :x="c.x - (w.id === 'ng' ? 1.500 : .5)" :y="c.top + .5" :width="w.id === 'ng' ? 4 : 2" :height="Math.max(1, c.bot - c.top - 1)"
                      :fill="c.dim ? '#2b2b50' : '#000'" :stroke="colour(c)" />
                    <rect v-else :x="c.x - (w.id === 'ng' ? 2 : 1)" :y="c.top" :width="w.id === 'ng' ? 5 : 3" :height="Math.max(1, c.bot - c.top)" :fill="colour(c)" />
                  </template>
                </g>
                <polyline v-for="(l, i) in p.lines" :key="'l' + i" :points="l.pts" :stroke="l.c" :stroke-width="l.w" :stroke-dasharray="l.dash || undefined" fill="none" />
                <polyline v-for="(l, i) in p.over" :key="'o' + i" :points="l.pts" :stroke="l.c" :stroke-width="l.w" :stroke-dasharray="l.dash" :stroke-linecap="l.cap" :fill="l.fill || 'none'" />
                <g class="axis">
                  <path :d="`M${w.x0 + .5} ${p.top}V${p.top + p.h - .5}H${w.right + .5}V${p.top}`" />
                  <path v-for="x in w.cols" :key="x" :d="`M${x + .5} ${p.top}v5M${x + .5} ${p.top + p.h}v${pi === 1 ? 0 : -5}`" />
                  <path v-for="y in p.grid" :key="y" :d="`M${w.x0} ${Math.floor(y) + .5}h6M${w.right} ${Math.floor(y) + .5}h-4`" />
                </g>
                <text v-for="l in p.labels" :key="l.t" class="lab" :x="w.right + 2.500" :y="l.y + 4">{{ l.t }}</text>
                <g v-for="f in p.flags" :key="f.t">
                  <rect :x="w.right + 3.500" :y="f.y - 7" :width="f.w" height="14" rx="2.500" :fill="f.bg" stroke="rgba(255,255,255,.45)" />
                  <text class="flag" :x="w.right + 5.500" :y="f.y + 4" :fill="f.fg">{{ f.t }}</text>
                </g>
                <text v-if="pi === 0" class="copy" :x="w.x0 + 3.500" y="61.500" textLength="191">2014 © TD Ameritrade IP Company, Inc.</text>
              </svg>
            </template>
            <svg class="times" :width="w.width" height="16" :viewBox="`${w.x0} 906 ${w.width} 16`">
              <text v-for="(t, i) in w.times" :key="t" class="lab" :x="w.cols[i] - .5" y="919">{{ t }}</text>
            </svg>
            <div class="foot">
              <svg class="fb" viewBox="0 0 19 19"><circle cx="9.500" cy="9.500" r="5" stroke="#4c6478" stroke-width="1.500" fill="none" /><path d="M9.500 2v15M2 9.500h15" stroke="#f0f8e0" stroke-width="1.300" /></svg>
              <svg class="fb" viewBox="0 0 19 19"><path d="M2 17l4-4" stroke="#e8f0e8" stroke-width="2" /><circle cx="10" cy="8.500" r="6" fill="#7ea6c4" stroke="#c8dcea" /><path d="M10 5v7M6.500 8.500h7" stroke="#fffff0" stroke-width="2" /></svg>
              <svg class="fb" viewBox="0 0 19 19"><path d="M2 17l4-4" stroke="#e8f0e8" stroke-width="2" /><circle cx="10" cy="8.500" r="6" fill="#7ea6c4" stroke="#c8dcea" /><path d="M6.500 8.500h7" stroke="#fffff0" stroke-width="2" /></svg>
              <span class="fb dollar">$</span>
              <span class="sq"><svg width="15" height="15" viewBox="0 0 15 15"><path d="M9 3v9L5 7.500z" fill="#777" /></svg></span>
              <span class="track"><i></i></span>
              <span class="sq"><svg width="15" height="15" viewBox="0 0 15 15"><path d="M6 3v9l4-4.500z" fill="#999" /></svg></span>
              <svg class="fb" viewBox="0 0 19 19"><path d="M2 9.500l5-5v10zM17 9.500l-5-5v10z" fill="#e8f4d8" /><path d="M8.500 6v7M10.500 6v7" stroke="#6aa0d0" /></svg>
            </div>
          </div>

          <template v-if="w.id === 'cl'">
            <div class="vsplit"></div>
            <div class="trade">
              <div class="orderbtns">
                <svg class="tri" width="12" height="7" viewBox="0 0 12 7"><path d="M0 1h12L6 7z" fill="#0d4ca8" /></svg>
                <div class="grp">
                  <div class="line"><span class="btn buy">Buy MKT</span><span class="btn sell">Sell MKT</span><span class="btn cancel">Cancel...</span></div>
                  <div class="line"><span class="btn rev">Reverse</span><span class="btn flat">Flatten</span></div>
                </div>
                <svg class="wr" width="17" height="9" viewBox="0 0 17 9"><path d="M1 2h3v1H3v3h1v1H1M4 1h2v2h3v3H6v2H4" fill="none" stroke="#d8e4ff" stroke-width="1.300" /><path d="M9 3h7v3.500H9z" fill="#c87820" /></svg>
              </div>
              <div class="qty">
                <svg width="13" height="13" viewBox="0 0 13 13"><circle cx="6.500" cy="5.500" r="5.500" fill="#d8f0ff" /><path d="M3 9l-1 4 5-2z" fill="#8cc8f0" /><path d="M4.500 4.500c0-3 4-3 4-.5 0 1.500-2 1.500-2 3M6.500 8v1.500" stroke="#104070" stroke-width="1.500" fill="none" /></svg>
                <span class="orange ql">Qty:</span>
                <span class="qin">+2</span>
                <span class="spin"><svg width="12" height="16" viewBox="0 0 12 16"><path d="M2 6h8L6 2zM2 10h8l-4 4z" fill="#1860c0" /><path d="M0 8h12" stroke="#333" /></svg></span>
                <span class="qb">1</span><span class="qb">3</span><span class="qb">5</span><span class="qb wide">10</span><span class="qb wide">20</span>
              </div>
              <div class="tpl"><span class="orange"><span v-fit="45" class="ib">Template:</span></span><span class="sel"><span v-fit="29" class="ib">Single</span></span><i class="chk"></i><span v-fit="48" class="ib">auto send</span></div>
              <div class="pl"><span><span v-fit="45" class="ib">P/L Open</span>&nbsp;<em>$1,240.00</em></span><span><span v-fit="37" class="ib">P/L Day</span>&nbsp;<em>$10,380.00</em></span></div>
              <div class="pos">
                <i class="dot"></i>
                <div class="pc"><span>B/S</span><span><b class="grn">17</b> by <b class="red">19</b></span></div>
                <div class="pc short"><span>Pos Short</span><b class="red">-2</b></div>
                <div class="pc avg"><span>Avg Price</span><b><svg width="5" height="8" viewBox="0 0 5 8"><path d="M0 0l4 4-4 4z" fill="#d8a010" /></svg><span v-fit="52" class="ib">93.2700</span><svg width="5" height="8" viewBox="0 0 5 8"><path d="M5 0L1 4l4 4z" fill="#d8a010" /></svg></b></div>
              </div>
              <div class="ladder">
                <div class="lrow lhead"><span class="o"><i class="dot"></i>Orders</span><span>Volu...</span><span>Bi...</span><span>Price</span><span>A...</span><span>P/...</span></div>
                <div class="lbody">
                  <div class="lrows">
                    <div v-for="(r, i) in rows" :key="i" class="lrow">
                      <span></span><span class="v"><i :style="{ width: r.w + 'px' }"></i><em>{{ r.vol }}</em></span><span class="bid"></span><span class="price">92....</span><span class="ask"></span><span class="p">{{ r.pl }}</span>
                    </div>
                  </div>
                </div>
                <div class="lscroll">
                  <svg width="16" height="46" viewBox="0 0 16 46"><path d="M0 0h16v46H0z" fill="#c8c8c8" /><circle cx="8.500" cy="7" r="5" fill="#fff" stroke="#222" stroke-width="1.300" /><path d="M8.500 4.500v5M6 7h5M2 14l3-3" stroke="#000" stroke-width="1.500" /><path d="M0 15.500h16M0 30.500h16" stroke="#888" /><path d="M3 17h10l-5 5zM3 28h10l-5-5zM3 22.500h10" fill="none" stroke="#333" /><circle cx="8.500" cy="38" r="5" fill="#fff" stroke="#222" stroke-width="1.300" /><path d="M8.500 35.500v5M2 45l3-3" stroke="#000" stroke-width="1.500" /></svg>
                  <span class="ud"><svg width="16" height="15" viewBox="0 0 16 15"><path d="M4 10h8L8 5z" fill="#999" /></svg></span>
                  <i class="thumb"></i>
                  <span class="ud"><svg width="16" height="15" viewBox="0 0 16 15"><path d="M4 6h8l-4 5z" fill="#999" /></svg></span>
                </div>
              </div>
            </div>
          </template>

          <nav class="tabs">
            <span v-for="t in tabs" :key="t.t" class="tab" :class="{ on: tabOn(w, t.t) }" :style="{ height: t.h + 'px', marginTop: t.gap + 'px' }"><span v-fit="t.fit" class="vt">{{ t.t }}</span></span>
            <i class="notch n1"></i><i class="notch n2"></i>
          </nav>
        </div>
      </div>
      <div v-if="w.id === 'cl'" class="frame"></div>
      <div v-if="w.id === 'cl'" class="dock"><svg width="11" height="11" viewBox="0 0 11 11"><path d="M.5.500h10v10H.5z" fill="#111" stroke="#bbb" /><path d="M2 2l4 3.500L2 9zM8 2h1v7H8z" fill="#ddd" /></svg></div>
      <div v-if="w.id === 'cl'" class="pull"></div>
    </section>
    <div class="note n-a"><span v-fit="159" class="ib">1 hour of hold time.</span></div>
    <div class="note n-b"><span v-fit="45" class="ib">long .</span></div>
  </div>
</template>

<style>
html, body { margin: 0; background: #000; overflow: hidden; }
</style>

<style scoped>
* { box-sizing: border-box; }
.desk { position: relative; display: flex; width: 1910px; height: 943px; overflow: hidden; background: #000; color: #bdbdbd; font: 11px/13px "Liberation Sans", Arial, sans-serif; white-space: nowrap; }
.ib { display: inline-block; }
.win { position: relative; display: flex; height: 943px; }
.cl { width: 1092px; padding-right: 3px; }
.ng { width: 818px; }
.edge { width: 5px; flex: none; background: #000; }
.cl .edge { border-left: 1px solid #444; padding-right: 1px; }
.cl .edge i { display: block; width: 2px; height: 100%; background: #0080ff; }
.ng .edge { background: repeating-conic-gradient(#4a4a4a 0 25%, #0a0a0a 0 50%) 0 0 / 2px 2px; border-right: 2px solid #000; }
.frame { position: absolute; inset: 0 0 0 1px; border-right: 3px solid #0080ff; border-bottom: 2px solid #0080ff; pointer-events: none; }
.content { flex: 1; min-width: 0; display: flex; flex-direction: column; }

.bar { display: flex; align-items: center; height: 25px; margin-left: -2px; background: linear-gradient(#0d478a, #08305f 80%, #04203f); overflow: hidden; }
.ng .bar { background: linear-gradient(#303030, #1c1c1c 60%, #0c0c0c); }
.ring { width: 6px; height: 6px; margin: 0 3px 0 1px; border: 2px solid #1860b0; border-radius: 50%; flex: none; }
.combo { display: flex; align-items: center; justify-content: space-between; width: 116px; height: 17px; border: 1px solid #4a5a68; background: linear-gradient(#909090, #c8c8c8 60%, #d8d8d8); color: #111; flex: none; }
.combo b { padding-left: 1px; font-size: 11.500px; }
.combo svg { background: #0a0a0a; flex: none; }
.link { width: 15px; height: 15px; background: #f00; border: 1px solid #700; color: #000; font-size: 11px; text-align: center; flex: none; }
.linkicon { margin: 0 1px 0 1px; flex: none; }
.name { color: #9c6200; font-size: 12px; padding: 1px 0 0 1px; flex: none; }
.cl .name { width: 418px; }
.ng .name { width: 222px; }
.tools { display: flex; gap: 1px; height: 20px; margin-top: -1px; flex: none; }
.tool { display: flex; align-items: center; gap: 4px; height: 20px; padding: 0 2px; border: 1px solid #3d4752; background: linear-gradient(#2a2a2a, #161616); color: #bbb; overflow: hidden; }
.t-share { width: 55px; }
.t-brush, .t-wrench { width: 18px; padding: 0 1px; background: #000; border-color: #333; }
.t-5m { width: 36px; padding: 0 1px; background: #000; border-color: #222; }
.t-style { width: 49px; }
.t-drawings { width: 72px; }
.t-studies { width: 61px; }
.t-patterns { width: 66px; }
.tool svg { flex: none; }
.five { width: 31px; height: 14px; border-radius: 3px; background: linear-gradient(#b8c8d8, #8ea6bc); color: #222; font: bold 12px/15px "Liberation Sans", Arial, sans-serif; text-align: center; }
.net { width: 70px; padding: 1px 0 0 4px; color: #9c6200; flex: none; }
.last { font-size: 13.500px; flex: none; }
.cl .last { color: #00e800; width: 43px; padding-left: 1px; }
.ng .last { color: #f00; width: 42px; padding-left: 1px; }
.chg { display: flex; flex-direction: column; font-size: 9px; line-height: 10px; color: #e00000; letter-spacing: .1px; }
.ng .chg { color: #00e000; }

.body { flex: 1; display: flex; min-height: 0; }
.chart { display: flex; flex-direction: column; flex: none; height: 918px; }
.cl .chart { width: 755px; }
.ng .chart { width: 798px; }
.status { display: flex; height: 20px; flex: none; gap: 3px; }
.cells { display: flex; width: 700px; height: 20px; border: 1px solid #7d4f17; background: #05002c; overflow: hidden; }
.ng .cells { width: 747px; }
.cell { flex: none; height: 18px; padding: 3px 0 0 2px; border-right: 1px solid #7d4f17; overflow: hidden; }
.cell.tight { padding-left: 1px; }
.cell.sym { color: #12a028; font-weight: bold; padding-left: 2px; }
.bold { font-weight: bold; font-size: 13px; }
.red { color: #f00; }
.grn { color: #00e800; }
.dkg { color: #006400; }
.pink { color: #ffb4b4; }
.yel { color: #ff0; }
.dim { color: #808080; }
.split { height: 7px; flex: none; background: repeating-conic-gradient(#3a3a3a 0 25%, #000 0 50%) 0 0 / 2px 2px; border: solid #000; border-width: 2px 0; width: 700px; }
.ng .split { width: 747px; }
.pane { display: block; flex: none; overflow: hidden; }
.grid line { stroke: #87602e; stroke-dasharray: 1 4.330; shape-rendering: crispEdges; }
.grid.faint line { stroke: #8a7a5a; opacity: .35; }
.axis path { stroke: #7d4f17; fill: none; shape-rendering: crispEdges; }
.lab { fill: #85551a; font-size: 11px; letter-spacing: -.15px; }
.flag { font-size: 11px; letter-spacing: -.1px; }
.copy { fill: #999; font-size: 11px; }
.times { display: block; flex: none; }
.foot { display: flex; height: 19px; flex: none; margin-left: -2px; }
.cl .foot { width: 753px; }
.ng .foot { width: 799px; }
.fb { width: 19px; height: 19px; border: 1px solid #3d4a55; background: #000; flex: none; }
.dollar { color: #9cc8e8; font: bold 12px/13px "Liberation Sans", Arial, sans-serif; text-align: center; text-decoration: underline; text-underline-offset: 3px; text-decoration-color: #fff; }
.sq { width: 15px; height: 16px; margin: 1px 1px 0; background: linear-gradient(#2c2c2c, #1a1a1a); flex: none; }
.track { flex: 1; height: 16px; margin-top: 1px; background: linear-gradient(#050505, #2a2a2a); display: flex; justify-content: flex-end; }
.track i { width: 81px; height: 15px; background: repeating-linear-gradient(90deg, #1d4070 0 1px, #12294c 1px 2px); border: 1px solid #0c1c38; }
.ng .track i { width: 40px; }

.vsplit { width: 7px; flex: none; background: radial-gradient(#555 0 .6px, transparent .8px) 0 0 / 3px 4px; border-right: 2px solid #0c0c0c; }
.trade { width: 301px; flex: none; display: flex; flex-direction: column; }
.orderbtns { display: flex; height: 55px; padding: 3px 0 0 1px; }
.tri { margin-top: 24px; }
.grp { margin-left: 4px; width: 266px; flex: none; display: flex; flex-direction: column; gap: 5px; }
.line { display: flex; gap: 4px; }
.btn { height: 22px; border: 1px solid #3f4c58; background: linear-gradient(#0c0c0c, #1e1e1e); font-size: 12px; line-height: 21px; text-align: center; color: #bbb; letter-spacing: -.3px; }
.buy { width: 65px; background: linear-gradient(#183018, #0a1c0a); border-color: #2c5a34; color: #00d800; letter-spacing: -.5px; }
.sell { width: 63px; background: linear-gradient(#281010, #180c0c); border-color: #6a2c30; color: #e80000; letter-spacing: -.5px; }
.cancel { width: 68px; background: #141410; border-color: #4a4c44; color: #808078; letter-spacing: -.4px; }
.rev { width: 63px; letter-spacing: -.45px; }
.flat { width: 54px; letter-spacing: -.2px; }
.wr { margin-top: 20px; flex: none; }
.qty { display: flex; align-items: center; height: 24px; padding-left: 3px; }
.orange { color: #9c6200; }
.ql { width: 26px; padding-left: 3px; margin-right: 0; }
.qin { width: 62px; height: 18px; border: 1px solid #3d4752; border-right: 0; background: linear-gradient(#000, #181818); color: #ffc800; text-align: right; line-height: 17px; padding-right: 2px; }
.spin { width: 13px; height: 18px; border: 1px solid #3d4752; border-left: 0; overflow: hidden; }
.qb { width: 28px; height: 18px; border: 1px solid #3d4752; background: linear-gradient(#1c1c1c, #0c0c0c); text-align: center; line-height: 16px; margin-left: 0; }
.qb.wide { width: 34px; }
.tpl { display: flex; align-items: center; height: 24px; padding-left: 2px; }
.tpl .orange { width: 49px; }
.sel { width: 112px; height: 19px; border: 1px solid #9c6200; color: #ffc800; padding: 4px 0 0 2px; margin-right: 4px; background: linear-gradient(135deg, transparent 0 93.500%, #ffc800 93.500%); }
.chk { width: 13px; height: 13px; margin-right: 4px; background: linear-gradient(135deg, #eee, #aaa); border: 1px solid #666; }
.pl { display: flex; gap: 1px; height: 21px; margin: 15px 0 0 7px; padding-bottom: 1px; }
.pl > span { width: 146px; background: #001a00; border-top: 1px solid #222; padding: 4px 0 0 4px; }
.pl > span + span { padding-left: 3px; }
.pl em { font-style: normal; color: #00d848; letter-spacing: -.1px; }
.pos { display: flex; gap: 1px; height: 39px; padding-bottom: 1px; }
.dot { width: 6px; height: 6px; border-radius: 50%; background: #6a6a6a; display: inline-block; flex: none; }
.pos .dot { margin: 6px 0 0 0; }
.pc { flex: 1; display: flex; flex-direction: column; padding: 4px 0 0 4px; gap: 3px; font-size: 11px; }
.pc b { font-size: 13.500px; }
.short { background: #220000; padding-left: 3px; }
.avg { background: linear-gradient(#4a2c30, #2a1214); }
.avg b { display: flex; align-items: center; gap: 1px; padding-left: 3px; color: #e01010; }
.ladder { flex: 1; min-height: 0; display: grid; grid-template: 21px 1fr / 283px 16px; column-gap: 1px; overflow: hidden; height: 738px; }
.lrow { display: grid; grid-template-columns: 108px 42px 29px 42px 29px 28px; column-gap: 1px; height: 21px; padding-bottom: 1px; background: #1c1c1c; }
.lhead { background: #000; }
.lhead span { background: #14181c; padding: 5px 0 0; text-align: center; letter-spacing: -.1px; }
.lhead .o { text-align: left; padding-left: 1px; letter-spacing: 0; }
.lhead .o .dot { margin-right: 7px; }
.lbody { overflow: hidden; grid-row: 2; height: 717px; display: flex; }
.lrows { margin-top: -12px; }
.lrows .lrow span { background: #000; }
.lrows .lrow .v { display: grid; align-items: center; }
.v i, .v em { grid-area: 1 / 1; font-style: normal; }
.v i { height: 20px; background: linear-gradient(90deg, #6a5208 0 20%, #80660c 20% 50%, #987a10 50% 70%, #b09014 70%); }
.v em { padding-left: 3px; color: #ffc800; letter-spacing: -.2px; }
.lrows .lrow .bid { background: #001600; }
.lrows .lrow .ask { background: #220000; }
.lrows .lrow .price { color: #fff; padding: 5px 0 0 8px; letter-spacing: -.1px; }
.lrows .lrow .p { background: #003020; color: #00ff7c; text-align: right; padding: 5px 2px 0 0; }
.lscroll { grid-row: 1 / 3; grid-column: 2; display: flex; flex-direction: column; background: linear-gradient(90deg, #000, #1e1e1e); height: 738px; }
.lscroll svg { display: block; flex: none; }
.ud { height: 16px; background: #1c1c1c; border: 1px solid #333; flex: none; }
.thumb { height: 15px; margin: 325px 0 auto; background: #12294c; border: 1px solid #1d4070; }

.tabs { position: relative; background: #303030; border-left: 1px solid #707070; display: flex; flex-direction: column; align-items: flex-start; padding-left: 3px; overflow: hidden; }
.cl .tabs { width: 21px; }
.ng .tabs { width: 15px; }
.tab { width: 16px; border-radius: 8px; background: linear-gradient(90deg, #202020, #383838); border: 1px solid #0a0a0a; box-shadow: 0 0 0 1px #3e3e3e; display: flex; align-items: center; justify-content: center; flex: none; color: #a8a8a8; }
.tab.on { background: #161616; color: #e8b800; }
.vt { writing-mode: vertical-rl; transform: rotate(180deg); line-height: 14px; }
.notch { position: absolute; left: -1px; border: 4px solid transparent; border-left: 8px solid #000; }
.n1 { top: 46px; }
.n2 { top: 357px; }
.dock { position: absolute; left: 0; top: 918px; width: 15px; height: 25px; background: #161616; border: 1px solid #3a3a3a; padding: 9px 0 0 1px; }
.pull { position: absolute; left: 35px; top: 940px; width: 28px; height: 3px; background: #111; border-radius: 3px 3px 0 0; }

.note { position: absolute; background: #fff; border: 6px solid #f00; border-radius: 8px; color: #f00; font: 18px/24px "Noto Sans", "Open Sans", sans-serif; box-shadow: 1px 2px 4px rgba(0, 0, 0, .5); padding: 7px 0 0 11px; }
.n-a { left: 784px; top: 466px; width: 268px; height: 193px; }
.n-b { left: 1458px; top: 450px; width: 266px; height: 85px; padding-left: 12px; }
</style>
